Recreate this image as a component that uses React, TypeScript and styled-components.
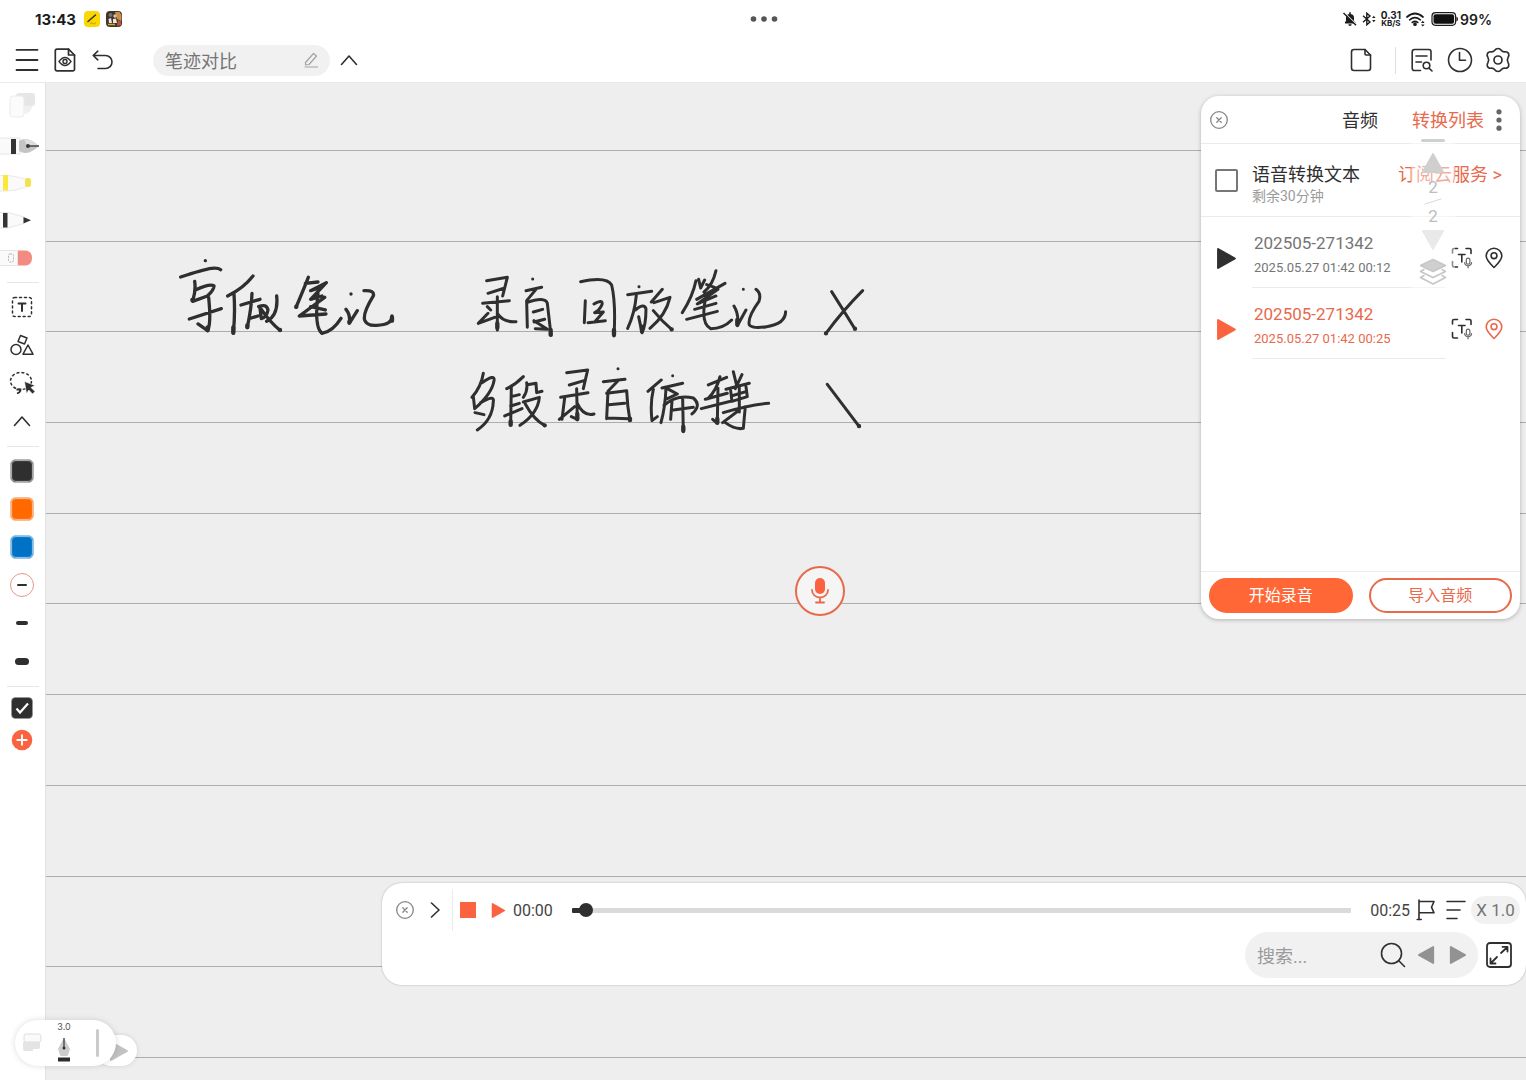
import React from "react";
import styled, { createGlobalStyle } from "styled-components";

const ink = "#2f2f2f";
const coral = "#fb6340";
const coralText = "#e8694b";
const grey = "#757575";

const GlobalStyle = createGlobalStyle`
  *, *::before, *::after { box-sizing: border-box; }
  body {
    margin: 0;
    background: #fff;
    color: ${ink};
    font-family: Roboto, "Noto Sans CJK SC", sans-serif;
  }
  button, input { font: inherit; color: inherit; }
  svg { display: block; flex: none; }
`;

/* ---------- shell ---------- */

const Shell = styled.div`
  position: relative;
  display: flex;
  flex-direction: column;
  height: 100vh;
  overflow: hidden;
`;

const StatusBar = styled.header`
  display: grid;
  grid-template-columns: 1fr auto 1fr;
  align-items: center;
  height: 38px;
  padding: 0 34px 0 35px;
  font-family: Inter, sans-serif;
  color: #1c1c1c;
`;

const StatusGroup = styled.div<{ $end?: boolean }>`
  display: flex;
  align-items: center;
  justify-content: ${(p) => (p.$end ? "flex-end" : "flex-start")};
  gap: ${(p) => (p.$end ? 4 : 6)}px;
`;

const Clock = styled.time`
  margin-right: 2px;
  font-size: 15px;
  font-weight: 700;
`;

const Battery = styled.span`
  display: flex;
  align-items: center;
  gap: 2px;
  font-size: 14px;
  font-weight: 600;
`;

const NetSpeed = styled.span`
  display: grid;
  justify-items: center;
  font-size: 10px;
  line-height: 9px;
  font-weight: 700;
  small { font-size: 8px; line-height: 7px; }
`;

const Toolbar = styled.nav`
  display: flex;
  align-items: center;
  height: 45px;
  padding: 0 9px 0 8px;
  border-bottom: 1px solid #e9e9e9;
`;

const Spacer = styled.span`
  flex: 1;
`;

const IconButton = styled.button<{ $w?: number; $h?: number }>`
  display: grid;
  place-items: center;
  flex: none;
  width: ${(p) => p.$w ?? 38}px;
  height: ${(p) => p.$h ?? 38}px;
  padding: 0;
  border: 0;
  background: none;
  cursor: pointer;
`;

const TitleField = styled.label`
  display: flex;
  align-items: center;
  width: 177px;
  height: 31px;
  margin-left: 31px;
  padding: 0 12px;
  border-radius: 16px;
  background: #f1f1f1;
  color: ${grey};
`;

const BareInput = styled.input`
  flex: 1;
  min-width: 0;
  padding: 3px 0 0;
  border: 0;
  outline: 0;
  background: none;
  font-size: 18px;
  line-height: 26px;
  &::placeholder { color: #9a9a9a; opacity: 1; }
`;

const BarDivider = styled.span`
  width: 1px;
  height: 27px;
  margin: 0 7px 0 15px;
  background: #dedede;
`;

const Workspace = styled.div`
  display: flex;
  flex: 1;
  min-height: 0;
`;

/* ---------- tool rail ---------- */

const Rail = styled.aside`
  display: flex;
  flex-direction: column;
  flex: none;
  width: 45px;
  padding-top: 3px;
`;

const RailDivider = styled.hr`
  width: 32px;
  height: 1px;
  margin: 6px 7px 5px;
  border: 0;
  background: #e6e6e6;
`;

const Swatch = styled.span<{ $color: string; $ring: string }>`
  width: 24px;
  height: 24px;
  border: 1px solid ${(p) => p.$ring};
  border-radius: 6px;
  background: ${(p) => p.$color};
  box-shadow: inset 0 0 1px 1px ${(p) => p.$ring};
`;

const Stroke = styled.span<{ $w: number; $h: number }>`
  width: ${(p) => p.$w}px;
  height: ${(p) => p.$h}px;
  border-radius: 4px;
  background: ${ink};
`;

const StrokeRing = styled.span`
  display: grid;
  place-items: center;
  width: 24px;
  height: 24px;
  border: 1px solid #e59a86;
  border-radius: 50%;
`;

/* ---------- paper ---------- */

const Paper = styled.main`
  position: relative;
  display: grid;
  grid-template-rows: 68px repeat(10, 1fr) 22px;
  flex: 1;
  min-width: 0;
  border-left: 1px solid #e2e2e2;
  background: #eee;
`;

const Ruled = styled.div`
  border-bottom: 1px solid #adadad;
`;

const InkLayer = styled.svg`
  position: absolute;
  top: 0;
  left: 0;
`;

const MicButton = styled.button`
  position: absolute;
  top: 483px;
  left: 749px;
  display: grid;
  place-items: center;
  width: 50px;
  height: 50px;
  padding: 0;
  border: 2px solid ${coralText};
  border-radius: 50%;
  background: #f5f5f5;
`;

/* ---------- audio panel ---------- */

const AudioPanel = styled.section`
  position: absolute;
  top: 13px;
  right: 6px;
  display: flex;
  flex-direction: column;
  width: 319px;
  height: 523px;
  border-radius: 18px;
  background: #fff;
  box-shadow: 0 1px 4px rgba(0, 0, 0, 0.25);
`;

const PanelHeader = styled.header`
  display: flex;
  align-items: center;
  height: 48px;
  padding: 0 8px 0 4px;
  border-bottom: 1px solid #ebebeb;
`;

const Tab = styled.button<{ $active?: boolean }>`
  padding: 2px 0 0;
  margin-right: ${(p) => (p.$active ? 2 : 34)}px;
  border: 0;
  background: none;
  font-size: 18px;
  line-height: 26px;
  color: ${(p) => (p.$active ? coralText : ink)};
`;

const ConvertRow = styled.div`
  display: flex;
  align-items: center;
  height: 73px;
  padding: 0 18px 0 14px;
  border-bottom: 1px solid #ebebeb;
`;

const CheckBox = styled.input`
  appearance: none;
  width: 23px;
  height: 23px;
  margin: 0 14px 0 0;
  border: 2px solid #777;
  border-radius: 2px;
  background: #fff;
`;

const ConvertLabel = styled.label`
  display: grid;
  flex: 1;
  padding-top: 8px;
  font-size: 18px;
  line-height: 23px;
  small { font-size: 14px; line-height: 20px; color: #9b9b9b; }
`;

const CloudLink = styled.a`
  margin-bottom: 10px;
  font-size: 18px;
  line-height: 26px;
  color: ${coralText};
  text-decoration: none;
`;

const ClipList = styled.ul`
  flex: 1;
  margin: 0;
  padding: 0;
  list-style: none;
`;

const ClipRow = styled.li<{ $active?: boolean }>`
  display: flex;
  height: 71px;
  padding-right: 10px;
  color: ${(p) => (p.$active ? coralText : grey)};
`;

const ClipActions = styled.div`
  display: flex;
  align-items: center;
  height: 71px;
  padding-top: 11px;
`;

const ClipText = styled.div`
  display: flex;
  flex-direction: column;
  justify-content: flex-end;
  flex: 1;
  gap: 3px;
  padding: 0 0 9px 2px;
  border-bottom: 1px solid #ebebeb;
  font-size: 17px;
  line-height: 24px;
  time { font-size: 13px; line-height: 20px; }
`;

const PanelFooter = styled.footer`
  display: flex;
  gap: 16px;
  padding: 6px 8px;
  border-top: 1px solid #ebebeb;
`;

const PillButton = styled.button<{ $solid?: boolean }>`
  flex: 1;
  height: 35px;
  padding: 1px 0 0;
  border: 2px solid ${(p) => (p.$solid ? "#ff6737" : coralText)};
  border-radius: 18px;
  background: ${(p) => (p.$solid ? "#ff6737" : "#fff")};
  color: ${(p) => (p.$solid ? "#fff" : coralText)};
  font-size: 16px;
  line-height: 24px;
`;

/* ---------- page navigator ---------- */

const PageNav = styled.div`
  position: absolute;
  top: 56px;
  right: 71px;
  display: flex;
  flex-direction: column;
  align-items: center;
  width: 44px;
  padding-bottom: 2px;
  border-radius: 6px;
  background: rgba(255, 255, 255, 0.45);
  color: #bdbdbd;
  font-size: 17px;
  line-height: 22px;
`;

const NavHandle = styled.span`
  width: 24px;
  height: 3px;
  margin-bottom: 8px;
  border-radius: 2px;
  background: #cfcfcf;
`;

/* ---------- player ---------- */

const Player = styled.section`
  position: absolute;
  right: 0;
  bottom: 95px;
  left: 336px;
  display: flex;
  flex-direction: column;
  gap: 2px;
  height: 102px;
  padding: 7px 6px 7px 8px;
  border-radius: 20px;
  background: #fff;
  box-shadow: 0 0 2px rgba(0, 0, 0, 0.3);
`;

const PlayerRow = styled.div<{ $end?: boolean }>`
  display: flex;
  align-items: center;
  justify-content: ${(p) => (p.$end ? "flex-end" : "flex-start")};
  height: ${(p) => (p.$end ? 46 : 40)}px;
  padding-right: ${(p) => (p.$end ? 5 : 0)}px;
`;

const PlayerDivider = styled.span`
  width: 1px;
  height: 42px;
  margin: 0 0 0 2px;
  background: #ececec;
`;

const Elapsed = styled.time`
  padding-top: 2px;
  font-size: 16px;
  line-height: 22px;
  color: #444;
`;

const Seek = styled.input`
  appearance: none;
  flex: 1;
  min-width: 0;
  height: 5px;
  margin: 0 19px;
  border-radius: 1px;
  background: linear-gradient(90deg, ${ink} 15px, #dadada 15px);
  &::-webkit-slider-thumb {
    appearance: none;
    width: 14px;
    height: 14px;
    border-radius: 50%;
    background: ${ink};
  }
`;

const SpeedButton = styled.button`
  width: 49px;
  height: 28px;
  padding: 0;
  border: 0;
  border-radius: 14px;
  background: #f1f1f1;
  color: ${grey};
  font-size: 17px;
`;

const SearchField = styled.div`
  display: flex;
  align-items: center;
  width: 233px;
  height: 46px;
  margin-right: 5px;
  padding: 0 4px 0 12px;
  border-radius: 23px;
  background: #f1f1f1;
`;

/* ---------- floating pen dock ---------- */

const Dock = styled.div`
  position: absolute;
  bottom: 14px;
  left: 15px;
  display: flex;
  align-items: flex-end;
`;

const DockMain = styled.div`
  z-index: 1;
  display: flex;
  align-items: center;
  width: 101px;
  height: 46px;
  padding: 0 17px 0 7px;
  border-radius: 23px;
  background: #fff;
  box-shadow: 0 0 6px rgba(0, 0, 0, 0.14);
`;

const DockPen = styled.button`
  display: flex;
  flex-direction: column;
  align-items: center;
  gap: 4px;
  width: 44px;
  height: 46px;
  padding: 2px 0 0;
  border: 0;
  background: none;
  font: 9px/10px Inter, sans-serif;
  color: #555;
`;

const DockGrip = styled.span`
  width: 3px;
  height: 28px;
  margin-left: auto;
  border-radius: 2px;
  background: #cbcbcb;
`;

const DockToggle = styled.button`
  display: grid;
  place-items: center end;
  width: 41px;
  height: 31px;
  margin-left: -20px;
  padding: 0 8px 0 0;
  border: 0;
  border-radius: 16px;
  background: #fff;
  box-shadow: 0 0 5px rgba(0, 0, 0, 0.12);
`;

/* ---------- icons ---------- */

type IconProps = { w: number; h: number; sw?: number; color?: string; children: React.ReactNode };

const Line = ({ w, h, sw = 1.6, color = ink, children }: IconProps) => (
  <svg
    width={w}
    height={h}
    viewBox={`0 0 ${w} ${h}`}
    fill="none"
    stroke={color}
    strokeWidth={sw}
    strokeLinecap="round"
    strokeLinejoin="round"
    aria-hidden="true"
  >
    {children}
  </svg>
);

const CloseIcon = () => (
  <Line w={20} h={20} sw={1.3} color="#858585">
    <circle cx="10" cy="10" r="8.3" />
    <path d="M7.8 7.8l4.4 4.4M12.2 7.8l-4.4 4.4" />
  </Line>
);

const ChevronUp = () => (
  <Line w={18} h={12}>
    <path d="M1.500 10.500 9 2l7.500 8.500" />
  </Line>
);

const Triangle = ({ size, color, dir = "right" }: { size: number; color: string; dir?: "right" | "left" | "up" | "down" }) => {
  const turn = { right: 0, down: 90, left: 180, up: 270 }[dir];
  return (
    <svg width={size} height={size} viewBox="0 0 20 20" aria-hidden="true">
      <path d="M2 0 18.500 9.200Q19.500 10 18.500 10.800L2 20Q1 20 1 19V1Q1 0 2 0z" fill={color} transform={`rotate(${turn} 10 10)`} />
    </svg>
  );
};

const TranscribeIcon = () => (
  <Line w={22} h={22} sw={1.6}>
    <path d="M1.500 6V3Q1.500 1.500 3 1.500H6.500M15 1.500h3.500Q20 1.500 20 3V6.500M1.500 14.500v4Q1.500 20 3 20H6.500" />
    <path d="M7.500 7.500h6.500M10.800 7.500V15" />
    <rect x="15.300" y="11.200" width="3.600" height="6" rx="1.800" strokeWidth="1.200" stroke="#666" />
    <path d="M13.600 15.500q.4 3.300 3.500 3.300t3.500-3.300M17.100 18.800v2" strokeWidth="1.200" stroke="#666" />
  </Line>
);

const PinIcon = ({ color }: { color: string }) => (
  <Line w={18} h={22} sw={1.600} color={color}>
    <path d="M9 20.500C5 16.500 1.200 13 1.200 9a7.800 7.800 0 0 1 15.600 0c0 4-3.800 7.500-7.800 11.500z" />
    <circle cx="9" cy="8.700" r="2.900" />
  </Line>
);

/* ---------- ink strokes, in a 3x pen grid ---------- */

const noteOne = [
  "M136 62h.1",
  "M62 111Q130 88 155 85Q175 83 182 89",
  "M104 124Q108 150 99 180",
  "M106 150Q150 130 162 138Q162 150 142 168L98 184",
  "M88 237L184 206",
  "M146 172Q154 250 143 272L114 252",
  "M279 108Q250 145 203 168",
  "M222 162Q226 220 220 280",
  "M243 195L300 178",
  "M276 160Q275 200 262 262",
  "M274 234L294 228",
  "M296 200Q320 190 324 210Q320 232 304 236L300 204",
  "M350 168Q356 225 320 244",
  "M304 208Q330 246 360 271",
  "M445 112Q430 150 408 202",
  "M436 130L474 126",
  "M499 128L452 152L470 146",
  "M499 128L452 178L486 168",
  "M494 172L418 228L498 222",
  "M452 200L496 210",
  "M474 160Q462 262 486 280Q518 275 543 235",
  "M573 162h.1",
  "M558 208Q572 225 568 250L592 212",
  "M612 152Q645 150 640 168Q608 220 614 240Q620 258 650 256Q698 254 696 228",
];

const noteTwo = [
  "M80 62L142 52L128 108",
  "M84 100L134 84",
  "M68 130L148 122",
  "M112 110L112 210",
  "M82 140L92 150",
  "M55 190L84 160M55 190L104 172",
  "M112 160Q130 188 168 185",
  "M218 57h.1",
  "M198 92L245 82",
  "M228 88L200 122L202 202",
  "M200 128Q255 108 262 130Q268 180 273 226",
  "M220 156L248 148M222 186L254 178M226 206L262 208L222 182",
  "M362 65Q440 48 455 75Q468 130 462 228",
  "M376 122L373 188",
  "M402 132Q430 116 426 134Q418 152 404 158L430 156L404 186M384 188L436 182",
  "M537 80h.1",
  "M503 104L575 94",
  "M529 106Q524 160 503 205",
  "M526 150Q552 128 558 146Q558 196 546 218L536 170",
  "M607 88L574 126",
  "M582 128L630 112Q618 165 570 205",
  "M580 152Q606 184 635 208",
  "M708 62Q698 110 667 158",
  "M716 58L722 84L734 60",
  "M768 32Q758 76 732 96",
  "M740 74L764 82",
  "M795 70L710 118",
  "M774 88L712 132L768 108",
  "M704 148L768 130M680 178L772 154",
  "M738 110Q720 190 752 206Q790 206 815 180",
  "M850 88h.1",
  "M822 138Q838 165 832 197L858 150",
  "M888 88Q905 100 897 124Q862 172 868 195Q880 207 920 200Q976 192 977 155",
  "M1115 95Q1150 150 1185 207",
  "M1208 92Q1150 150 1098 220",
  "M70 340Q64 380 36 412",
  "M66 368Q106 340 102 362Q96 400 44 446L40 410",
  "M62 428Q104 404 100 424Q98 480 52 510",
  "M45 458L72 464",
  "M190 350Q165 375 140 386",
  "M154 380L152 496",
  "M154 410L178 404M152 438L178 430M134 468L186 446",
  "M200 368Q204 392 190 412",
  "M202 374L228 370L230 398L246 394",
  "M190 426L238 412Q234 460 180 496",
  "M196 432Q222 480 255 497",
  "M320 338L383 330L370 386",
  "M328 375L372 362",
  "M302 412L384 398",
  "M350 386L352 478L334 470",
  "M314 414L306 478",
  "M298 478L344 440",
  "M352 430Q370 470 402 462",
  "M474 326h.1",
  "M430 365L495 358",
  "M474 362L444 394L440 476",
  "M440 400L500 392Q502 440 510 482",
  "M446 434L494 430M442 474L508 476",
  "M604 360Q575 385 564 394",
  "M580 388Q570 430 576 482L592 470",
  "M638 347h.1",
  "M606 384L668 370",
  "M618 384Q616 440 603 488",
  "M626 388L652 402L622 416",
  "M612 436Q650 402 700 414Q726 436 696 462",
  "M636 424L632 478",
  "M668 412L670 515",
  "M640 450L700 442",
  "M745 375L800 352",
  "M780 350Q770 390 744 416",
  "M736 418L802 400M724 446L812 424",
  "M774 384L772 490L758 478",
  "M820 335L830 376M846 344L826 386",
  "M798 388L868 370",
  "M812 392L816 424L862 410L858 380",
  "M814 408L860 394",
  "M790 458Q870 434 926 430",
  "M838 380L838 456",
  "M796 488Q826 510 850 505L856 440",
  "M838 450L788 488",
  "M1102 373L1198 500",
];

const clips = [
  { name: "202505-271342", date: "2025.05.27 01:42 00:12", active: false },
  { name: "202505-271342", date: "2025.05.27 01:42 00:25", active: true },
];

const swatches = [
  { name: "黑色", color: "#2f2f2f", ring: "#b5b5b5" },
  { name: "橙色", color: "#ff6900", ring: "#f8bd93" },
  { name: "蓝色", color: "#0072c6", ring: "#96c6e8" },
];

/* ---------- sections ---------- */

const TopStatus = () => (
  <StatusBar>
    <StatusGroup>
      <Clock>13:43</Clock>
      <svg width="16" height="16" viewBox="0 0 16 16" aria-hidden="true">
        <rect width="16" height="16" rx="4" fill="#fcd800" />
        <path d="M4 10.500 11.500 4" stroke="#333" strokeWidth="1.500" strokeLinecap="round" />
        <path d="M6 12.500q2-1.500 3 0t3-1" stroke="#a58d1c" strokeWidth=".8" fill="none" />
      </svg>
      <svg width="16" height="16" viewBox="0 0 16 16" aria-hidden="true">
        <rect width="16" height="16" rx="4" fill="#40352b" />
        <path d="M9 1h4.500l2 3v6L11 8z" fill="#c98f4e" />
        <path d="M12 9l3 1v4l-4 1z" fill="#b9553f" />
        <circle cx="4.500" cy="4" r="2" fill="#6e7470" />
        <circle cx="9" cy="5" r="1.700" fill="#e4c59d" />
        <path d="M2.500 8 5 7l1 5H3zM7 8l3-.5 1 4.500H7z" fill="#ece6da" />
        <path d="M2 13.500h7" stroke="#d9a52e" strokeWidth="1.500" />
      </svg>
    </StatusGroup>
    <svg width="28" height="6" viewBox="0 0 28 6" fill="#555" aria-hidden="true">
      <circle cx="3.500" cy="3" r="2.800" />
      <circle cx="14" cy="3" r="2.800" />
      <circle cx="24.500" cy="3" r="2.800" />
    </svg>
    <StatusGroup $end>
      <svg width="16" height="16" viewBox="0 0 16 16" aria-hidden="true">
        <path d="M3 12.500V11l1-1V7a4 4 0 0 1 8 0v3l1.500 1.500v1zM6.300 13.300h3.400a1.700 1.700 0 0 1-3.400 0zM7.200 1.200h1.600v2H7.200z" fill="#1c1c1c" />
        <path d="M2.500 2 15 14" stroke="#fff" strokeWidth="1.200" />
        <path d="M1.500 2 14 14.200" stroke="#1c1c1c" strokeWidth="1.400" />
      </svg>
      <svg width="15" height="14" viewBox="0 0 15 14" fill="none" stroke="#1c1c1c" strokeWidth="1.400" aria-hidden="true">
        <path d="M1 3.800 8 10 4.800 12.800V1.200L8 4 1 10.200" />
        <path d="M11.800 3.800 13.500 6h-3.400zM11.800 10.200 13.500 8h-3.400z" fill="#1c1c1c" stroke="none" />
      </svg>
      <NetSpeed>
        0.31<small>KB/S</small>
      </NetSpeed>
      <svg width="22" height="16" viewBox="0 0 22 16" fill="none" stroke="#1c1c1c" strokeWidth="1.700" strokeLinecap="round" aria-hidden="true">
        <path d="M2 6q8-7 16 0M4.700 8.800q5.300-4.400 10.600 0M7.300 11.400q2.700-2 5.400 0" />
        <circle cx="10" cy="13.200" r="1" fill="#1c1c1c" />
        <path d="M17.800 9.800 19.600 12h-3.600zM17.800 15.600l1.800-2.200h-3.600z" fill="#1c1c1c" stroke="none" />
      </svg>
      <Battery>
        <svg width="27" height="14" viewBox="0 0 27 14" aria-hidden="true">
          <rect x="1" y=".7" width="23.600" height="12.600" rx="3.500" fill="none" stroke="#1c1c1c" strokeWidth="1.200" />
          <rect x="2.500" y="2.200" width="20.600" height="9.600" rx="2" fill="#111" />
          <path d="M25.400 4.500q1.600.5 1.600 2.500t-1.600 2.500z" fill="#1c1c1c" />
        </svg>
        99%
      </Battery>
    </StatusGroup>
  </StatusBar>
);

const TopToolbar = () => (
  <Toolbar aria-label="笔记工具">
    <IconButton aria-label="菜单">
      <Line w={24} h={24} sw={1.800}>
        <path d="M1.500 1.800h21M1.500 12h21M1.500 22h21" />
      </Line>
    </IconButton>
    <IconButton aria-label="预览">
      <Line w={22} h={24} sw={1.700}>
        <path d="M3 1.200H14.500L20.500 7V21.500Q20.500 22.800 19 22.800H3Q1.300 22.800 1.300 21.200V3Q1.300 1.200 3 1.200z" />
        <path d="M14.500 1.200V7h6" />
        <path d="M5 13.500q6-8 12 0q-6 8-12 0z" strokeWidth="1.400" />
        <circle cx="11" cy="13.500" r="2" strokeWidth="1.400" />
      </Line>
    </IconButton>
    <IconButton aria-label="撤销">
      <Line w={22} h={20}>
        <path d="M5.800 1.200 1.200 5.500 5.800 9.800M1.200 5.500H13.500a6.500 6.500 0 0 1 0 13H6" />
      </Line>
    </IconButton>
    <TitleField>
      <BareInput aria-label="标题" defaultValue="笔迹对比" />
      <Line w={14} h={16} sw={1.200} color="#a3a3a3">
        <path d="M1.500 10.500 9.500 1.500 12.500 4 5 12.500 1.500 13zM1 15h12.500" />
      </Line>
    </TitleField>
    <IconButton aria-label="收起">
      <ChevronUp />
    </IconButton>
    <Spacer />
    <IconButton aria-label="页面">
      <Line w={22} h={24}>
        <path d="M4 1.500H15L20.500 7V20Q20.500 22.500 18 22.500H4Q1.500 22.500 1.500 20V4Q1.500 1.500 4 1.500z" />
        <path d="M15 1.500V6Q15 7 16 7h4.500" />
      </Line>
    </IconButton>
    <BarDivider />
    <IconButton aria-label="查找">
      <Line w={22} h={24}>
        <path d="M9.500 22.500H3.500Q1.200 22.500 1.200 20.200V3.800Q1.200 1.500 3.500 1.500H18Q20 1.500 20 3.800V12" />
        <path d="M5 8h11M5 14h5.500" />
        <circle cx="15.500" cy="17.500" r="3.300" />
        <path d="M18 20.200 21 23" />
      </Line>
    </IconButton>
    <IconButton aria-label="历史">
      <Line w={26} h={26}>
        <circle cx="13" cy="13" r="11.500" />
        <path d="M12.500 5.500V13.200h6" />
      </Line>
    </IconButton>
    <IconButton aria-label="设置">
      <Line w={26} h={26} sw={1.700}>
        <path d="M13 1.500c1.800 0 2.600.8 3.500 2s2 1.500 3.500 1.300c2-.2 3.200.6 3.700 2.200s.1 2.300-.6 3.400c-.9 1.500-.9 3.700 0 5.200.7 1.100 1.100 1.900.6 3.400s-1.700 2.400-3.700 2.200c-1.500-.2-2.600.1-3.500 1.300s-1.700 2-3.500 2-2.600-.8-3.500-2-2-1.500-3.500-1.300c-2 .2-3.200-.7-3.700-2.200s-.1-2.300.6-3.400c.9-1.500.9-3.700 0-5.200-.7-1.100-1.100-1.900-.6-3.400S4 4.600 6 4.800c1.500.2 2.600-.1 3.500-1.300s1.700-2 3.500-2z" />
        <circle cx="13" cy="13" r="4" />
      </Line>
    </IconButton>
  </Toolbar>
);

const ToolRail = () => (
  <Rail aria-label="画笔">
    <IconButton $w={44} aria-label="页面切换">
      <svg width="28" height="28" viewBox="0 0 28 28" aria-hidden="true">
        <rect x="8" y="2" width="19" height="13" rx="3" fill="#e6e6e6" />
        <path d="M16 15h8q0 6-7 8z" fill="#f0f0f0" />
        <rect x="2" y="5" width="14" height="21" rx="3" fill="#fbfbfb" stroke="#ebebeb" />
      </svg>
    </IconButton>
    <IconButton $w={44} aria-label="钢笔">
      <svg width="44" height="32" viewBox="0 0 44 32" aria-hidden="true">
        <rect x="-6" y="11" width="26" height="16" fill="#fafafa" stroke="#e6e6e6" />
        <rect x="11" y="12" width="5" height="15" fill="#333" />
        <path d="M19 14q8-6 20 5-12 11-20 5z" fill="#c4c4c4" />
        <path d="M24 12q8 1 15 7l-12 0z" fill="#dedede" />
        <circle cx="28" cy="19" r="2" fill="#333" />
        <path d="M28 19h11" stroke="#444" strokeWidth="1.500" />
      </svg>
    </IconButton>
    <IconButton $w={44} aria-label="荧光笔">
      <svg width="44" height="32" viewBox="0 0 44 32" aria-hidden="true">
        <path d="M-2 10.500H8Q16 11 26 14.500V22Q16 25.500 8 26H-2z" fill="#fafafa" stroke="#e9e9e9" />
        <rect x="25" y="13" width="6" height="9" rx="2.500" fill="#f3e14f" />
        <rect x="3" y="10" width="5" height="15.500" fill="#fbe93a" />
      </svg>
    </IconButton>
    <IconButton $w={44} aria-label="圆珠笔">
      <svg width="44" height="32" viewBox="0 0 44 32" aria-hidden="true">
        <path d="M-2 9.500H8L24 14V20.500L8 25H-2z" fill="#fafafa" stroke="#e8e8e8" />
        <rect x="3" y="10" width="4.500" height="14.500" fill="#333" />
        <path d="M23.500 14 31 17.300 23.500 20.500z" fill="#333" />
      </svg>
    </IconButton>
    <IconButton $w={44} aria-label="橡皮擦">
      <svg width="44" height="32" viewBox="0 0 44 32" aria-hidden="true">
        <path d="M17 9.500h9q6 1 6 7.500t-6 7.500H17z" fill="#f28c83" />
        <rect x="-4" y="9.500" width="21.500" height="15" fill="#fafafa" stroke="#e6e6e6" />
        <rect x="8.500" y="13" width="5" height="8" rx="1.500" fill="none" stroke="#b5b5b5" strokeDasharray="2 1" />
      </svg>
    </IconButton>
    <RailDivider />
    <IconButton $w={44} aria-label="文本">
      <Line w={22} h={22} sw={1.500}>
        <rect x="1.500" y="1.500" width="19" height="19" rx="2" strokeDasharray="2 3" />
        <path d="M7.500 7.500h7M11 7.500V15" strokeWidth="2" />
      </Line>
    </IconButton>
    <IconButton $w={44} aria-label="图形">
      <Line w={24} h={22} sw={1.500}>
        <circle cx="6" cy="15.500" r="5" />
        <path d="M18 11 23 20.200H13z" />
        <path d="M10.500 1.500 17 4 14.500 10 8 7.500z" />
      </Line>
    </IconButton>
    <IconButton $w={44} aria-label="套索">
      <svg width="28" height="26" viewBox="0 0 28 26" aria-hidden="true">
        <ellipse cx="13" cy="11" rx="10.500" ry="8.500" fill="none" stroke={ink} strokeWidth="1.500" strokeDasharray="3 2" />
        <path d="M8.500 19.500h4q0 3-3.500 4" fill="none" stroke={ink} strokeWidth="1.800" />
        <path d="M16.500 11.500 27 15.500 23 17.500 27 21.500 24.500 24 20.800 20 18.500 23.500z" fill={ink} stroke="#fff" strokeWidth=".6" />
      </svg>
    </IconButton>
    <IconButton $w={44} aria-label="收起工具">
      <ChevronUp />
    </IconButton>
    <RailDivider />
    {swatches.map((s) => (
      <IconButton $w={44} key={s.name} aria-label={s.name}>
        <Swatch $color={s.color} $ring={s.ring} />
      </IconButton>
    ))}
    <IconButton $w={44} aria-label="细">
      <StrokeRing>
        <Stroke $w={10} $h={2} />
      </StrokeRing>
    </IconButton>
    <IconButton $w={44} aria-label="中">
      <Stroke $w={12} $h={4} />
    </IconButton>
    <IconButton $w={44} aria-label="粗">
      <Stroke $w={14} $h={7} />
    </IconButton>
    <RailDivider />
    <IconButton $w={44} $h={32} aria-label="已选">
      <svg width="22" height="22" viewBox="0 0 22 22" aria-hidden="true">
        <rect x=".5" y=".5" width="21" height="21" rx="4" fill={ink} stroke="#999" strokeWidth=".6" />
        <path d="M5.500 11.500 9 15.500 17 6.500" stroke="#fff" strokeWidth="2.200" fill="none" />
      </svg>
    </IconButton>
    <IconButton $w={44} $h={32} aria-label="添加">
      <svg width="22" height="22" viewBox="0 0 22 22" aria-hidden="true">
        <circle cx="11" cy="11" r="10.300" fill={coral} />
        <path d="M11 6.300v9.400M6.300 11h9.400" stroke="#fff" strokeWidth="1.900" strokeLinecap="round" />
      </svg>
    </IconButton>
  </Rail>
);

const Handwriting = () => (
  <InkLayer width="860" height="400" viewBox="46 83 860 400" fill="none" stroke="#2f2f2f" strokeWidth="10" strokeLinecap="round" strokeLinejoin="round" aria-hidden="true">
    <g transform="translate(160 240) scale(0.3333)">
      <path d={noteOne.join("")} />
      <path d="M143 262v8M220 262v16M360 270h.1M262 256v6M97 180h.1M409 200h.1M568 246h.1M696 232v10" strokeWidth="13" />
    </g>
    <g transform="translate(460 260) scale(0.3333)">
      <path d={noteTwo.join("")} strokeWidth="9" />
      <path d="M112 190v14M272 210v14M462 210v14M546 200v14M635 208h.1M1098 220h.1M1185 206h.1M1197 498h.1M254 496h.1M670 500v12M352 462v16M152 484v10M510 476v4M772 476v12M832 180v14" strokeWidth="13" />
    </g>
  </InkLayer>
);

const Audio = () => (
  <AudioPanel aria-label="音频">
    <PanelHeader>
      <IconButton $w={28} aria-label="关闭音频">
        <CloseIcon />
      </IconButton>
      <Spacer />
      <Tab>音频</Tab>
      <Tab $active>转换列表</Tab>
      <IconButton $w={26} aria-label="更多">
        <svg width="6" height="22" viewBox="0 0 6 22" fill="#666" aria-hidden="true">
          <circle cx="3" cy="2.800" r="2.600" />
          <circle cx="3" cy="11" r="2.600" />
          <circle cx="3" cy="19.200" r="2.600" />
        </svg>
      </IconButton>
    </PanelHeader>
    <ConvertRow>
      <CheckBox type="checkbox" id="convert" />
      <ConvertLabel htmlFor="convert">
        语音转换文本<small>剩余30分钟</small>
      </ConvertLabel>
      <CloudLink href="#cloud">订阅云服务 &gt;</CloudLink>
    </ConvertRow>
    <ClipList>
      {clips.map((c) => (
        <ClipRow key={c.date} $active={c.active}>
          <ClipActions>
            <IconButton $w={51} aria-label="播放">
              <Triangle size={21} color={c.active ? coral : ink} />
            </IconButton>
          </ClipActions>
          <ClipText>
            {c.name}
            <time>{c.date}</time>
          </ClipText>
          <ClipActions>
            <IconButton $w={32} aria-label="转文字">
              <TranscribeIcon />
            </IconButton>
            <IconButton $w={32} aria-label="定位">
              <PinIcon color={c.active ? coralText : ink} />
            </IconButton>
          </ClipActions>
        </ClipRow>
      ))}
    </ClipList>
    <PanelFooter>
      <PillButton $solid>开始录音</PillButton>
      <PillButton>导入音频</PillButton>
    </PanelFooter>
  </AudioPanel>
);

const Pages = () => (
  <PageNav>
    <NavHandle />
    <IconButton $w={44} $h={26} aria-label="上一页">
      <Triangle size={22} color="#cfcfcf" dir="up" />
    </IconButton>
    <span>2</span>
    <Line w={18} h={7} sw={1} color="#d8d8d8">
      <path d="M1 6 17 1" />
    </Line>
    <span>2</span>
    <IconButton $w={44} $h={25} aria-label="下一页">
      <Triangle size={22} color="#e9e9e9" dir="down" />
    </IconButton>
    <IconButton $w={44} $h={40} aria-label="图层">
      <Line w={28} h={28} sw={1.500} color="#c6c6c6">
        <path d="M14 1.500 26.500 7.500 14 13.500 1.500 7.500z" fill="#cfcfcf" />
        <path d="M5 11.500 1.500 13.500 14 19.500 26.500 13.500 23 11.500M5 17.500 1.500 19.500 14 26 26.500 19.500 23 17.500" />
      </Line>
    </IconButton>
  </PageNav>
);

const PlayerBar = () => (
  <Player aria-label="播放器">
    <PlayerRow>
      <IconButton $w={30} aria-label="关闭播放器">
        <CloseIcon />
      </IconButton>
      <IconButton $w={30} aria-label="收起播放器">
        <Line w={10} h={18}>
          <path d="M1.500 2 9 9 1.500 16" />
        </Line>
      </IconButton>
      <PlayerDivider />
      <IconButton $w={30} aria-label="停止">
        <svg width="16" height="16" aria-hidden="true">
          <rect width="16" height="16" fill={coral} />
        </svg>
      </IconButton>
      <IconButton $w={30} aria-label="播放">
        <Triangle size={15} color={coral} />
      </IconButton>
      <Elapsed>00:00</Elapsed>
      <Seek type="range" min={0} max={1000} defaultValue={10} aria-label="进度" />
      <Elapsed>00:25</Elapsed>
      <IconButton $w={31} aria-label="标记">
        <Line w={20} h={22}>
          <path d="M3 1V20.500M1.200 20.500h4M3 2.500H18L15.500 8.200 18 13.800H3" />
        </Line>
      </IconButton>
      <IconButton $w={30} aria-label="列表">
        <Line w={20} h={20}>
          <path d="M1 1.500H19M1 10H14M1 18.500H11" />
        </Line>
      </IconButton>
      <SpeedButton>X 1.0</SpeedButton>
    </PlayerRow>
    <PlayerRow $end>
      <SearchField>
        <BareInput aria-label="搜索" placeholder="搜索..." />
        <IconButton $w={34} aria-label="搜索">
          <Line w={26} h={26}>
            <circle cx="11.500" cy="11.500" r="10" />
            <path d="M18.800 18.800 24.500 24.500" />
          </Line>
        </IconButton>
        <IconButton $w={32} aria-label="上一个">
          <Triangle size={18} color="#929292" dir="left" />
        </IconButton>
        <IconButton $w={32} aria-label="下一个">
          <Triangle size={18} color="#929292" />
        </IconButton>
      </SearchField>
      <IconButton $w={32} $h={42} aria-label="展开">
        <Line w={26} h={26} sw={1.800}>
          <rect x="1" y="1" width="24" height="24" rx="3" />
          <path d="M15 11 21.500 5M16.500 4.800h5V9.500M11 15 4.500 21.500M4.500 16.500v5h5" />
        </Line>
      </IconButton>
    </PlayerRow>
  </Player>
);

const PenDock = () => (
  <Dock>
    <DockMain>
      <svg width="20" height="20" viewBox="0 0 20 20" aria-hidden="true">
        <rect x="2" y="1" width="17" height="8" rx="2" fill="#fafafa" stroke="#dedede" />
        <path d="M1 9h17v5q0 2-2 2h-5v2H3q-2 0-2-2z" fill="#e4e4e4" />
      </svg>
      <DockPen>
        3.0
        <svg width="16" height="28" viewBox="0 0 16 28" aria-hidden="true">
          <path d="M8 2q3.500 6 6 11L11.500 20H4.500L2 13Q4.500 8 8 2z" fill="#cdcdcd" />
          <path d="M8 2v9" stroke="#333" strokeWidth="1.200" />
          <circle cx="8" cy="12" r="1.500" fill="#333" />
          <rect x="2" y="21.500" width="12" height="4" fill="#2c2c33" />
        </svg>
      </DockPen>
      <DockGrip />
    </DockMain>
    <DockToggle aria-label="展开画笔">
      <Triangle size={20} color="#c2c2c2" />
    </DockToggle>
  </Dock>
);

export default function App() {
  return (
    <Shell>
      <GlobalStyle />
      <TopStatus />
      <TopToolbar />
      <Workspace>
        <ToolRail />
        <Paper>
          {Array.from({ length: 11 }, (_, i) => (
            <Ruled key={i} />
          ))}
          <Handwriting />
          <MicButton aria-label="录音">
            <svg width="20" height="28" viewBox="0 0 20 28" fill="none" stroke={coralText} strokeWidth="1.800" strokeLinecap="round" aria-hidden="true">
              <rect x="5" y="1" width="10" height="16" rx="5" fill={coral} stroke="none" />
              <path d="M2 13a8 7.500 0 0 0 16 0M10 20.500v5M6 25.500h8" />
            </svg>
          </MicButton>
          <Audio />
          <Pages />
          <PlayerBar />
        </Paper>
      </Workspace>
      <PenDock />
    </Shell>
  );
}
